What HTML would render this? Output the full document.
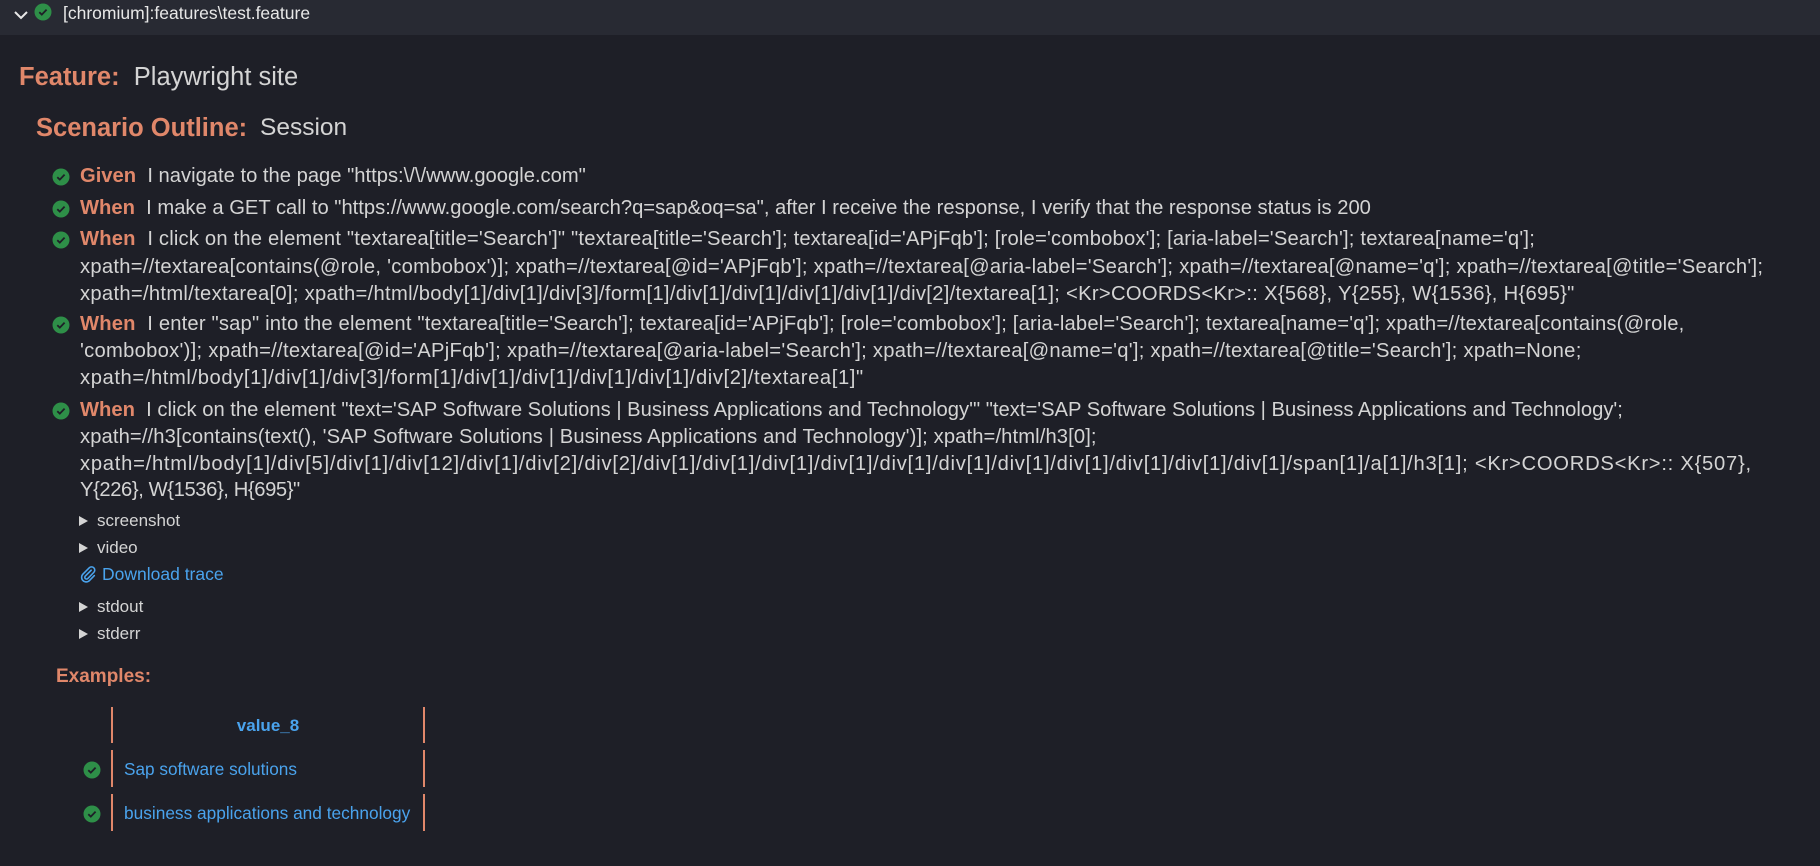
<!DOCTYPE html>
<html><head><meta charset="utf-8">
<style>
html,body{margin:0;padding:0;width:1820px;height:866px;overflow:hidden;background:#1e1f27;font-family:"Liberation Sans",sans-serif;color:#d4d4d4}
.hdr{position:absolute;left:0;top:0;width:1820px;height:35px;background:#282a33}
.a{position:absolute;white-space:nowrap;line-height:27px;font-size:20.2px}
.k{color:#e0876a;font-weight:bold}
.big{font-size:25.5px;line-height:30px}
.ck{position:absolute;width:18px;height:18px}
.blue{color:#4aa3ed}
.tri{position:absolute;width:0;height:0;border-left:9px solid #d4d4d4;border-top:5.5px solid transparent;border-bottom:5.5px solid transparent}
.bd{position:absolute;width:2px;background:#e0876a}
</style></head><body>
<div class="hdr"></div>
<svg style="position:absolute;left:12px;top:6px" width="18" height="18" viewBox="0 0 18 18"><path d="M3 6 L9 12 L15 6" stroke="#e8e8e8" stroke-width="2" fill="none"/></svg>
<svg class="ck" style="left:34px;top:3px" viewBox="0 0 18 18"><circle cx="9" cy="9" r="8.5" fill="#2e8f48"/><path d="M5.3 9.2 L7.8 11.6 L12.6 6.6" stroke="#1e1f27" stroke-width="1.8" fill="none"/></svg>
<div class="a" style="left:63px;top:0;font-size:17.5px;line-height:26px;color:#e8e8e8">[chromium]:features\test.feature</div>

<div class="a big" style="left:19px;top:62px"><span class="k">Feature:</span>&nbsp; Playwright site</div>
<div class="a big" style="left:36px;top:113px"><span class="k">Scenario Outline:</span></div>
<div class="a big" style="left:260px;top:113px;font-size:24.5px">Session</div>

<svg class="ck" style="left:52px;top:168px" viewBox="0 0 18 18"><circle cx="9" cy="9" r="8.5" fill="#2e8f48"/><path d="M5.3 9.2 L7.8 11.6 L12.6 6.6" stroke="#1e1f27" stroke-width="1.8" fill="none"/></svg>
<div class="a" style="left:80px;top:163px"><span class="k">Given</span>&nbsp; I navigate to the page "https:\/\/www.google.com"</div>

<svg class="ck" style="left:52px;top:200px" viewBox="0 0 18 18"><circle cx="9" cy="9" r="8.5" fill="#2e8f48"/><path d="M5.3 9.2 L7.8 11.6 L12.6 6.6" stroke="#1e1f27" stroke-width="1.8" fill="none"/></svg>
<div class="a" style="left:80px;top:195px"><span class="k">When</span>&nbsp; I make a GET call to "https://www.google.com/search?q=sap&amp;oq=sa", after I receive the response, I verify that the response status is 200</div>

<svg class="ck" style="left:52px;top:231px" viewBox="0 0 18 18"><circle cx="9" cy="9" r="8.5" fill="#2e8f48"/><path d="M5.3 9.2 L7.8 11.6 L12.6 6.6" stroke="#1e1f27" stroke-width="1.8" fill="none"/></svg>
<div class="a" style="left:80px;top:226px;letter-spacing:0.19px"><span class="k">When</span>&nbsp; I click on the element "textarea[title='Search']" "textarea[title='Search']; textarea[id='APjFqb']; [role='combobox']; [aria-label='Search']; textarea[name='q'];</div>
<div class="a" style="left:80px;top:254px;letter-spacing:0.27px">xpath=//textarea[contains(@role, 'combobox')]; xpath=//textarea[@id='APjFqb']; xpath=//textarea[@aria-label='Search']; xpath=//textarea[@name='q']; xpath=//textarea[@title='Search'];</div>
<div class="a" style="left:80px;top:281px;letter-spacing:0.3px">xpath=/html/textarea[0]; xpath=/html/body[1]/div[1]/div[3]/form[1]/div[1]/div[1]/div[1]/div[1]/div[2]/textarea[1]; &lt;Kr&gt;COORDS&lt;Kr&gt;:: X{568}, Y{255}, W{1536}, H{695}"</div>

<svg class="ck" style="left:52px;top:316px" viewBox="0 0 18 18"><circle cx="9" cy="9" r="8.5" fill="#2e8f48"/><path d="M5.3 9.2 L7.8 11.6 L12.6 6.6" stroke="#1e1f27" stroke-width="1.8" fill="none"/></svg>
<div class="a" style="left:80px;top:311px;letter-spacing:0.18px"><span class="k">When</span>&nbsp; I enter "sap" into the element "textarea[title='Search']; textarea[id='APjFqb']; [role='combobox']; [aria-label='Search']; textarea[name='q']; xpath=//textarea[contains(@role,</div>
<div class="a" style="left:80px;top:338px;letter-spacing:0.28px">'combobox')]; xpath=//textarea[@id='APjFqb']; xpath=//textarea[@aria-label='Search']; xpath=//textarea[@name='q']; xpath=//textarea[@title='Search']; xpath=None;</div>
<div class="a" style="left:80px;top:365px;letter-spacing:0.6px">xpath=/html/body[1]/div[1]/div[3]/form[1]/div[1]/div[1]/div[1]/div[1]/div[2]/textarea[1]"</div>

<svg class="ck" style="left:52px;top:402px" viewBox="0 0 18 18"><circle cx="9" cy="9" r="8.5" fill="#2e8f48"/><path d="M5.3 9.2 L7.8 11.6 L12.6 6.6" stroke="#1e1f27" stroke-width="1.8" fill="none"/></svg>
<div class="a" style="left:80px;top:397px"><span class="k">When</span>&nbsp; I click on the element "text='SAP Software Solutions | Business Applications and Technology'" "text='SAP Software Solutions | Business Applications and Technology';</div>
<div class="a" style="left:80px;top:424px;letter-spacing:0.11px">xpath=//h3[contains(text(), 'SAP Software Solutions | Business Applications and Technology')]; xpath=/html/h3[0];</div>
<div class="a" style="left:80px;top:451px;letter-spacing:0.74px">xpath=/html/body[1]/div[5]/div[1]/div[12]/div[1]/div[2]/div[2]/div[1]/div[1]/div[1]/div[1]/div[1]/div[1]/div[1]/div[1]/div[1]/div[1]/div[1]/span[1]/a[1]/h3[1]; &lt;Kr&gt;COORDS&lt;Kr&gt;:: X{507},</div>
<div class="a" style="left:80px;top:477px;letter-spacing:-0.4px">Y{226}, W{1536}, H{695}"</div>

<div class="tri" style="left:79px;top:516px"></div><div class="a" style="left:97px;top:507px;font-size:17px">screenshot</div>
<div class="tri" style="left:79px;top:543px"></div><div class="a" style="left:97px;top:534px;font-size:17px">video</div>
<svg style="position:absolute;left:80px;top:566px" width="17" height="17" viewBox="0 0 16 16"><path d="M10.5 4 L5 9.5 a1.6 1.6 0 0 0 2.3 2.3 L13 6 a3 3 0 0 0 -4.3 -4.3 L2.8 7.6 a4.3 4.3 0 0 0 6.1 6.1 L13.5 9" stroke="#4aa3ed" stroke-width="1.5" fill="none" stroke-linecap="round"/></svg>
<div class="a blue" style="left:102px;top:561px;font-size:17.5px">Download trace</div>
<div class="tri" style="left:79px;top:602px"></div><div class="a" style="left:97px;top:593px;font-size:17px">stdout</div>
<div class="tri" style="left:79px;top:629px"></div><div class="a" style="left:97px;top:620px;font-size:17px">stderr</div>

<div class="a k" style="left:56px;top:663px;font-size:19px">Examples:</div>

<div class="bd" style="left:111px;top:707px;height:36px"></div>
<div class="bd" style="left:423px;top:707px;height:36px"></div>
<div class="a blue" style="left:113px;top:712px;width:310px;text-align:center;font-weight:bold;font-size:17px">value_8</div>

<svg class="ck" style="left:83px;top:761px" viewBox="0 0 18 18"><circle cx="9" cy="9" r="8.5" fill="#2e8f48"/><path d="M5.3 9.2 L7.8 11.6 L12.6 6.6" stroke="#1e1f27" stroke-width="1.8" fill="none"/></svg>
<div class="bd" style="left:111px;top:750px;height:37px"></div>
<div class="bd" style="left:423px;top:750px;height:37px"></div>
<div class="a blue" style="left:124px;top:756px;font-size:17.2px">Sap software solutions</div>

<svg class="ck" style="left:83px;top:805px" viewBox="0 0 18 18"><circle cx="9" cy="9" r="8.5" fill="#2e8f48"/><path d="M5.3 9.2 L7.8 11.6 L12.6 6.6" stroke="#1e1f27" stroke-width="1.8" fill="none"/></svg>
<div class="bd" style="left:111px;top:794px;height:37px"></div>
<div class="bd" style="left:423px;top:794px;height:37px"></div>
<div class="a blue" style="left:124px;top:800px;font-size:17.3px">business applications and technology</div>
</body></html>
